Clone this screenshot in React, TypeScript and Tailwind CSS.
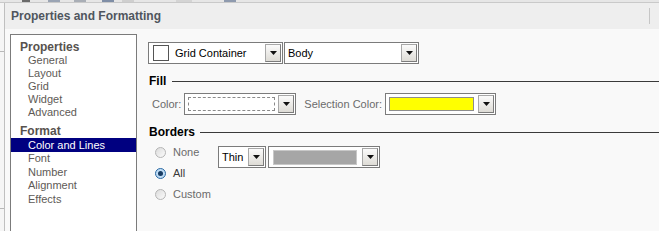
import React from "react";

const FONT = { fontFamily: '"Liberation Sans", Arial, sans-serif' };

function Caret() {
  return (
    <svg width="7" height="4" viewBox="0 0 7 4" className="block">
      <path d="M0 0h7L3.5 4z" fill="#111" />
    </svg>
  );
}

function DropButton({ w = "w-[16px]" }: { w?: string }) {
  return (
    <div
      className={`${w} self-stretch m-px flex items-center justify-center border border-[#a8a8a8] border-r-[#7c7c7c] border-b-[#7c7c7c] bg-gradient-to-b from-[#fbfbfb] to-[#dedcd6]`}
    >
      <Caret />
    </div>
  );
}

function Radio({ checked }: { checked?: boolean }) {
  if (checked) {
    return (
      <span className="w-[11px] h-[11px] rounded-full border border-[#2c6aa3] bg-[#bfdcf5] flex items-center justify-center">
        <span className="w-[5px] h-[5px] rounded-full bg-[#173c64]" />
      </span>
    );
  }
  return <span className="w-[11px] h-[11px] rounded-full border border-[#b5b5b5] bg-gradient-to-br from-[#dcdcdc] to-[#fbfbfb]" />;
}

const PROPS = ["General", "Layout", "Grid", "Widget", "Advanced"];
const FORMAT = ["Color and Lines", "Font", "Number", "Alignment", "Effects"];

export default function App() {
  return (
    <div className="w-[659px] h-[231px] overflow-hidden flex flex-col bg-[#f2f2f2]" style={FONT}>
      {/* toolbar remnants behind the dialog */}
      <div className="h-[3px] flex bg-[#e6e6e6] border-b border-[#c9c9c9]">
        <span className="ml-[22px] w-[8px] bg-[#6a6a6a]" />
        <span className="ml-[18px] w-[12px] bg-[#9aa4b4]" />
        <span className="ml-[14px] w-[12px] bg-[#a9aeb6]" />
        <span className="ml-[16px] w-[12px] bg-[#7f8ea6]" />
        <span className="ml-[8px] w-[12px] bg-[#cfcfcf]" />
        <span className="ml-[42px] w-[16px] bg-[#d4d4d4]" />
        <span className="ml-[32px] w-[12px] bg-[#8e9aae]" />
      </div>

      <div className="flex-1 flex min-h-0">
        <div className="w-[4px] bg-[#f5f5f5] flex flex-col">
          <span className="mt-[48px] h-px bg-[#b8b8b8]" />
          <span className="mt-[156px] h-px bg-[#b8b8b8]" />
        </div>

        <div className="flex-1 flex flex-col border-l border-[#bfbfbf] min-w-0">
          {/* header */}
          <div className="h-[26px] bg-[#eeeeee] flex items-center">
            <span className="ml-[6px] text-[12px] font-bold text-[#50565e]">Properties and Formatting</span>
            <span className="flex-1" />
            <span className="w-px h-[16px] bg-[#c6c6c6] mr-[9px]" />
          </div>

          {/* body */}
          <div className="flex-1 bg-[#f9f9f9] flex items-start min-h-0">
            {/* left nav */}
            <div className="ml-[5px] mt-[5px] w-[127px] h-[220px] shrink-0 bg-white border border-[#7b7b7b] pt-[6px] text-[11px] text-[#5e5a56]">
              <div className="h-[13px] leading-[13px] pl-[9px] text-[12px] font-bold text-[#57524e]">Properties</div>
              {PROPS.map((p) => (
                <div key={p} className="h-[13px] leading-[13px] pl-[17px]">
                  {p}
                </div>
              ))}
              <div className="mt-[6px] h-[13px] leading-[13px] pl-[9px] text-[12px] font-bold text-[#57524e]">Format</div>
              {FORMAT.map((p, i) => (
                <div
                  key={p}
                  className={
                    i === 0
                      ? "h-[14px] leading-[14px] pl-[17px] bg-[#000080] text-white"
                      : "h-[13.5px] leading-[13.5px] pl-[17px]"
                  }
                >
                  {p}
                </div>
              ))}
            </div>

            {/* right panel */}
            <div className="flex-1 min-w-0 pl-[11px] pt-[13px] text-[11px]">
              <div className="flex gap-px">
                <div className="w-[135px] h-[22px] flex items-center bg-white border border-[#7b7b7b]">
                  <span className="ml-[4px] w-[16px] h-[16px] border border-[#555] bg-white" />
                  <span className="ml-[6px] flex-1 text-black">Grid Container</span>
                  <DropButton />
                </div>
                <div className="w-[135px] h-[22px] flex items-center bg-white border border-[#7b7b7b]">
                  <span className="ml-[3px] flex-1 text-black">Body</span>
                  <DropButton />
                </div>
              </div>

              <div className="mt-[10px] h-[14px] flex items-center">
                <span className="ml-px text-[12px] font-bold text-black">Fill</span>
                <span className="ml-[6px] flex-1 h-px bg-[#3a3a3a]" />
              </div>

              <div className="mt-[5px] flex items-center h-[22px]">
                <span className="ml-[4px] text-[#6b6b6b]">Color:</span>
                <div className="ml-[3px] w-[112px] h-[22px] flex items-center bg-white border border-[#7b7b7b]">
                  <span className="ml-[3px] flex-1 h-[14px] border border-dashed border-[#8a8a8a]" />
                  <span className="w-[2px]" />
                  <DropButton />
                </div>
                <span className="ml-[8px] text-[#6b6b6b]">Selection Color:</span>
                <div className="ml-[3px] w-[111px] h-[22px] flex items-center bg-white border border-[#7b7b7b]">
                  <span className="ml-[3px] flex-1 h-[14px] border border-[#8d8d8d] bg-[#ffff00]" />
                  <span className="w-[3px]" />
                  <DropButton />
                </div>
              </div>

              <div className="mt-[10px] h-[14px] flex items-center">
                <span className="ml-px text-[12px] font-bold text-black">Borders</span>
                <span className="ml-[5px] flex-1 h-px bg-[#3a3a3a]" />
              </div>

              <div className="mt-[3px] flex items-start">
                <div className="ml-[7px] w-[63px] flex flex-col">
                  {[
                    { label: "None", checked: false },
                    { label: "All", checked: true },
                    { label: "Custom", checked: false },
                  ].map((r) => (
                    <div key={r.label} className="h-[21px] flex items-center">
                      <Radio checked={r.checked} />
                      <span className={`ml-[7px] ${r.checked ? "text-[#3a3a3a]" : "text-[#6b6b6b]"}`}>{r.label}</span>
                    </div>
                  ))}
                </div>
                <div className="mt-[4px] flex gap-[2px]">
                  <div className="w-[48px] h-[22px] flex items-center bg-white border border-[#7b7b7b]">
                    <span className="ml-[3px] flex-1 text-black">Thin</span>
                    <DropButton />
                  </div>
                  <div className="w-[112px] h-[22px] flex items-center bg-white border border-[#7b7b7b]">
                    <span className="ml-[4px] flex-1 h-[15px] border border-[#c8c8c8] bg-[#a6a6a6]" />
                    <span className="w-[4px]" />
                    <DropButton />
                  </div>
                </div>
              </div>
            </div>
          </div>
        </div>
      </div>
    </div>
  );
}
